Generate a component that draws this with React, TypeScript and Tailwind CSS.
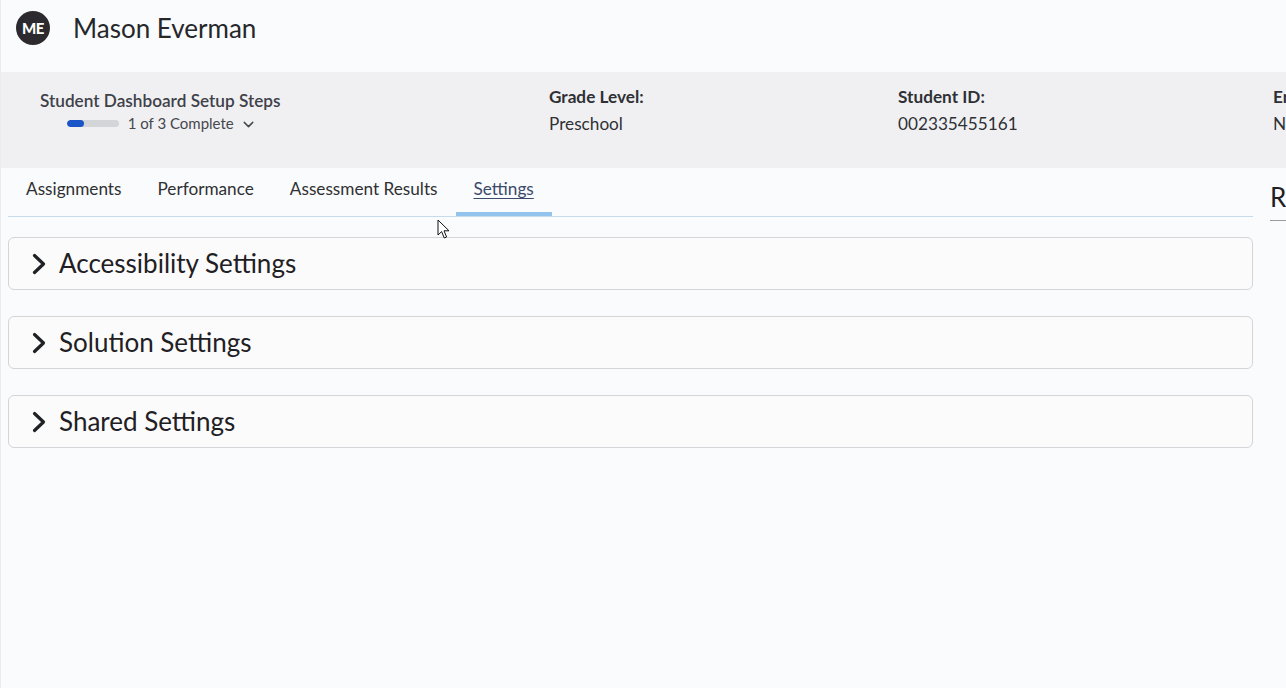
import { ChevronDown } from 'lucide-react';

const tabs = ['Assignments', 'Performance', 'Assessment Results', 'Settings'];
const sections = ['Accessibility Settings', 'Solution Settings', 'Shared Settings'];

function Chevron() {
  return (
    <svg width="18" height="24" viewBox="0 0 18 24" className="shrink-0">
      <path d="M4.5 3.5 L13.5 12 L4.5 20.5" fill="none" stroke="#202124" strokeWidth="3.2" strokeLinecap="round" strokeLinejoin="round" />
    </svg>
  );
}

export default function App() {
  return (
    <div className="relative w-screen h-[688px] overflow-hidden bg-[#fafbfc] border-l border-[#ececef] font-['Lato','Noto_Sans',sans-serif] text-[#2f3033]">
      {/* header */}
      <div className="h-[72px] flex items-start pt-[11px] pl-[15px] gap-[23px]">
        <div className="w-[34px] h-[34px] rounded-full bg-[#2c2a2e] flex items-center justify-center text-white text-[15px] font-black tracking-tight">
          ME
        </div>
        <div className="text-[26px] leading-[34px] text-[#25272b]">Mason Everman</div>
      </div>

      {/* summary band */}
      <div className="h-[96px] bg-[#f0f0f3] flex whitespace-nowrap">
        <div className="w-[548px] shrink-0 pl-[39px] pt-[17px]">
          <div className="inline-flex flex-col items-center">
            <div className="text-[17.2px] leading-[24px] font-semibold text-[#3f4148]">Student Dashboard Setup Steps</div>
            <div className="flex items-center -mt-[1px] pl-[3px]">
              <div className="w-[52px] h-[7px] rounded-full bg-[#d4d5d9] overflow-hidden">
                <div className="w-[17px] h-full rounded-full bg-[#1a55c8]" />
              </div>
              <span className="ml-[9px] text-[15px] leading-[22px] text-[#45474e]">1 of 3 Complete</span>
              <ChevronDown size={17} strokeWidth={2} className="ml-[6px] mt-[2px] text-[#45474e]" />
            </div>
          </div>
        </div>
        <div className="w-[349px] shrink-0 pt-[14px]">
          <div className="text-[17.2px] leading-[22px] font-bold text-[#2f3033]">Grade Level:</div>
          <div className="mt-[5px] text-[17.2px] leading-[22px] text-[#2f3033]">Preschool</div>
        </div>
        <div className="w-[375px] shrink-0 pt-[14px]">
          <div className="text-[17.2px] leading-[22px] font-bold text-[#2f3033]">Student ID:</div>
          <div className="mt-[5px] text-[17.2px] leading-[22px] text-[#2f3033]">002335455161</div>
        </div>
        <div className="shrink-0 pt-[14px]">
          <div className="text-[17.2px] leading-[22px] font-bold text-[#2f3033]">Enrollment:</div>
          <div className="mt-[5px] text-[17.2px] leading-[22px] text-[#2f3033]">No</div>
        </div>
      </div>

      {/* content */}
      <div className="flex pl-[7px]">
        <div className="w-[1245px] shrink-0">
          <div className="flex h-[49px] border-b border-[#c6dbeb]">
            {tabs.map((t) => {
              const active = t === 'Settings';
              return (
                <div key={t} className="relative px-[18px] pt-[10px] text-[17.2px] leading-[22px] whitespace-nowrap">
                  <span className={active ? 'underline underline-offset-[3px] text-[#3b4a6b]' : 'text-[#2f3033]'}>{t}</span>
                  {active && <div className="absolute left-0 right-0 bottom-0 h-[4px] bg-[#93c4ee]" />}
                </div>
              );
            })}
          </div>

          <div className="mt-[20px] flex flex-col gap-[26px]">
            {sections.map((s) => (
              <div key={s} className="h-[53px] rounded-[6px] border border-[#d4d5d8] bg-[#fbfbfc] flex items-center pl-[21px] gap-[11px]">
                <Chevron />
                <span className="text-[26px] leading-[30px] -mt-[2px] text-[#1f2023]">{s}</span>
              </div>
            ))}
          </div>
        </div>

        <div className="ml-[17px] shrink-0 w-[200px]">
          <div className="pt-[14px] pb-[8px] border-b border-[#9a9ca0] text-[26px] leading-[30px] text-[#1f2023] whitespace-nowrap">
            Resources
          </div>
        </div>
      </div>

      {/* mouse pointer */}
      <svg className="absolute left-[436px] top-[219px]" width="14" height="21" viewBox="0 0 14 21">
        <path d="M1 1 L1 16 L4.6 12.6 L7.3 19 L9.6 18 L7 11.8 L12 11.8 Z" fill="#fff" stroke="#111" strokeWidth="1" strokeLinejoin="round" />
      </svg>
    </div>
  );
}
